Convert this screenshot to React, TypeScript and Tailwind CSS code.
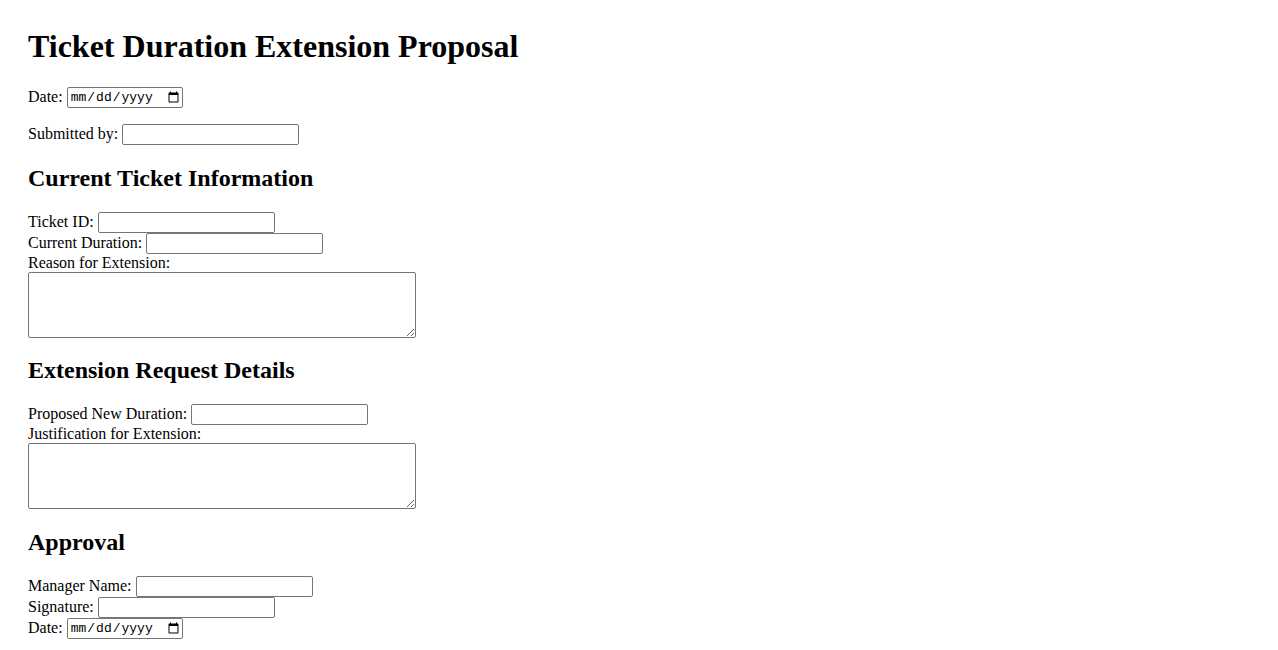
import React from 'react';

const inputCls =
  "w-[177px] h-[21px] border border-[#767676] rounded-[2px] px-[2px] text-[13.33px] font-['Liberation_Sans',sans-serif] bg-white ml-[4px]";
const dateCls =
  "w-[116px] h-[21px] border border-[#767676] rounded-[2px] pl-[2px] text-[13px] font-['Liberation_Mono',monospace] bg-white ml-[4px]";
const areaCls =
  'block w-[388px] h-[66px] border border-[#767676] rounded-[2px] bg-white';
const h2Cls = 'text-[24px] font-bold leading-[28px] mb-[20px]';

const Row: React.FC<{ label: string; type?: string; className?: string }> = ({
  label,
  type = 'text',
  className = '',
}) => (
  <div className={`flex items-start h-[21px] ${className}`}>
    <span className="leading-[19px]">{label}</span>
    <input type={type} className={type === 'date' ? dateCls : inputCls} />
  </div>
);

export default function App() {
  return (
    <div className="min-h-screen bg-white text-black px-[28px] pt-[28px] pb-[10px] font-['Liberation_Serif',serif] text-[16px]">
      <h1 className="text-[32px] font-bold leading-[37px] mb-[22px]">Ticket Duration Extension Proposal</h1>

      <Row label="Date:" type="date" className="mb-[16px]" />
      <Row label="Submitted by:" />

      <h2 className={`${h2Cls} mt-[19px]`}>Current Ticket Information</h2>
      <Row label="Ticket ID:" />
      <Row label="Current Duration:" />
      <div className="h-[18px] leading-[18px]">Reason for Extension:</div>
      <textarea className={areaCls} />

      <h2 className={`${h2Cls} mt-[18px]`}>Extension Request Details</h2>
      <Row label="Proposed New Duration:" />
      <div className="h-[18px] leading-[18px]">Justification for Extension:</div>
      <textarea className={areaCls} />

      <h2 className={`${h2Cls} mt-[19px]`}>Approval</h2>
      <Row label="Manager Name:" />
      <Row label="Signature:" />
      <Row label="Date:" type="date" />
    </div>
  );
}
